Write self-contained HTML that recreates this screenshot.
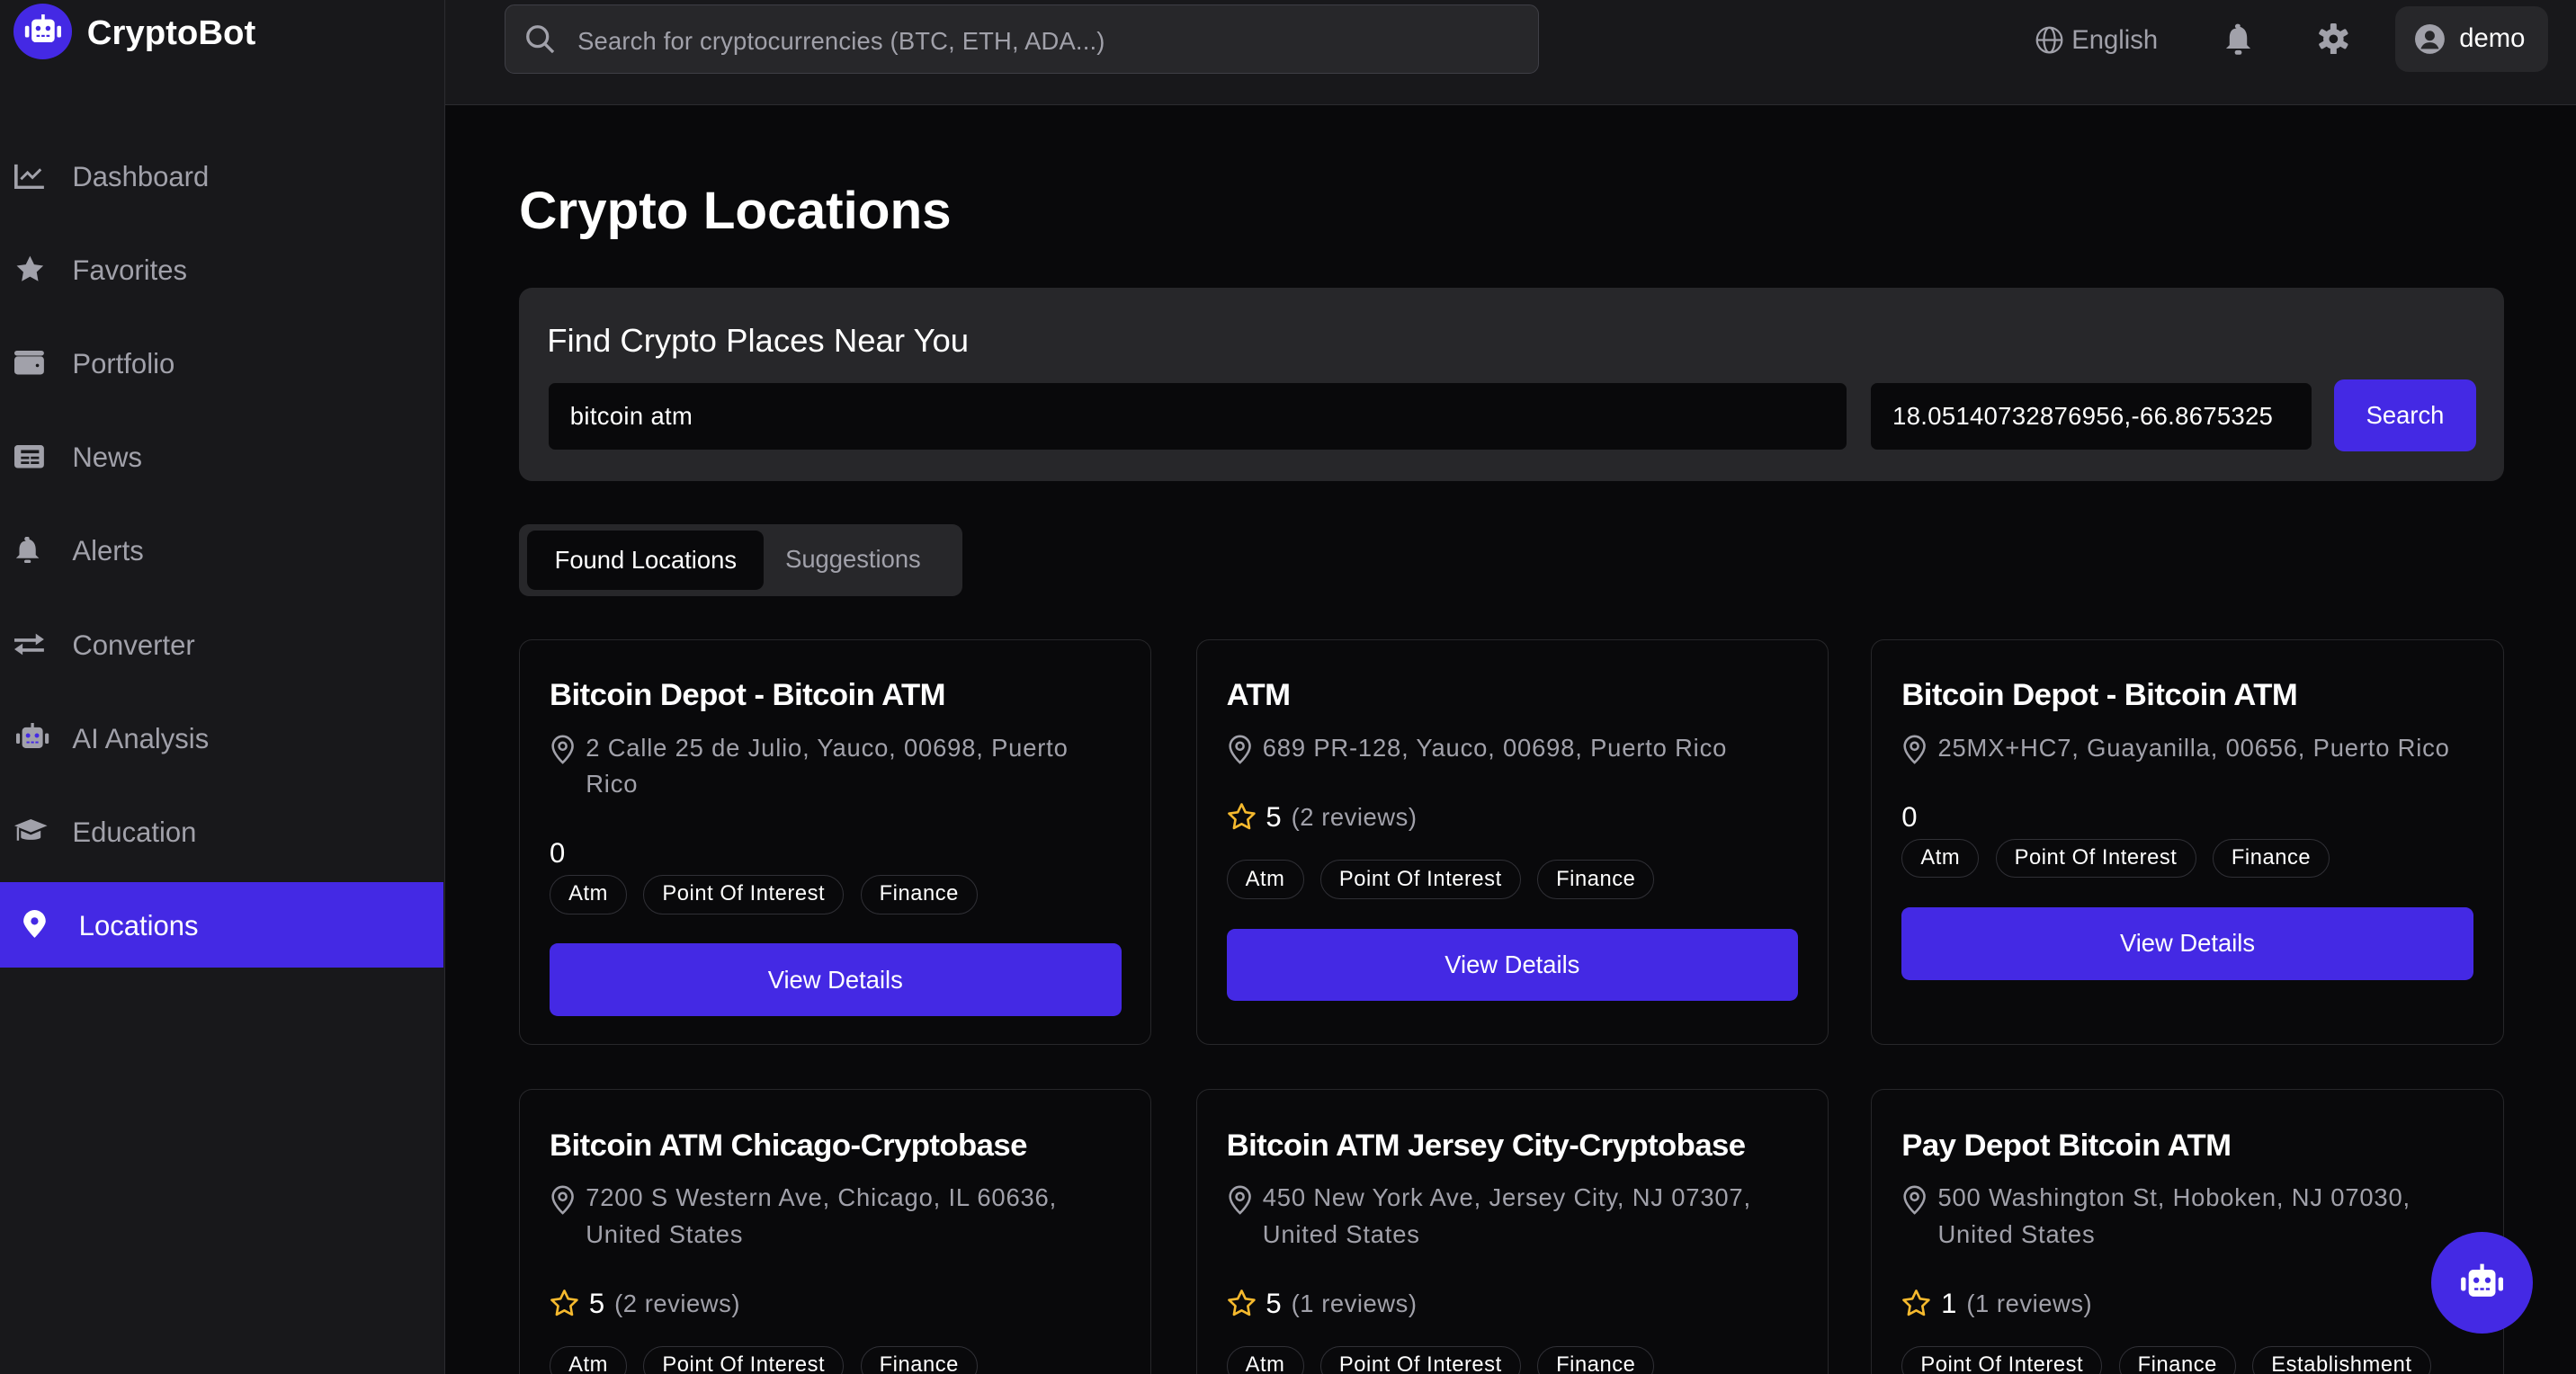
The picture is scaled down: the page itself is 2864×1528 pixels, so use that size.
<!DOCTYPE html>
<html><head><meta charset="utf-8"><style>
*{box-sizing:border-box;margin:0;padding:0}
html,body{width:2864px;height:1528px;overflow:hidden;background:#09090b}
#root{zoom:1.82653;width:1568px;height:837px;position:relative;font-family:"Liberation Sans",sans-serif;color:#fff;background:#09090b;overflow:hidden}
.side{position:absolute;left:0;top:0;width:271px;height:837px;background:#18181b;border-right:1px solid #2c2c30}
.logo{position:absolute;left:8px;top:2px;width:36px;height:34px;border-radius:50%;background:#4429e4;display:flex;align-items:center;justify-content:center}
.brand{position:absolute;left:53px;top:8px;font-size:21px;font-weight:bold}
.nav{position:absolute;left:0;width:270px;height:52px;display:flex;align-items:center;font-size:17px;color:#a1a1aa}
.nav svg{position:absolute;left:9px}
.nav span{position:absolute;left:44px;top:17px}
.nav.act{background:#4429e4;color:#fff}
.nav.act span{left:48px}
.top{position:absolute;left:271px;top:0;width:1297px;height:64px;background:#18181b;border-bottom:1px solid #2c2c30}
.sbox{position:absolute;left:36px;top:3px;width:630px;height:42px;background:#27272a;border:1px solid #3f3f46;border-radius:6px;font-size:15px;color:#a1a1aa;padding:13px 0 0 44px;letter-spacing:.1px}
.sbox svg{position:absolute;left:12px;top:11px}
.h1{position:absolute;left:316px;top:110px;font-size:32px;font-weight:bold}
.panel{position:absolute;left:316px;top:175px;width:1208px;height:118px;background:#27272a;border-radius:8px}
.inp{position:absolute;top:58px;height:41px;background:#09090b;border-radius:4px;font-size:15px;padding:12px 13px;white-space:nowrap;overflow:hidden;letter-spacing:.2px}
.btn{background:#4429e4;border-radius:6px;color:#fff;font-size:15px;display:flex;align-items:center;justify-content:center}
.tabs{position:absolute;left:316px;top:319px;width:270px;height:44px;background:#27272a;border-radius:6px;font-size:15px}
.card{position:absolute;width:385px;border:1px solid #27272a;border-radius:8px;background:#09090b;padding:20px 18px 0 18px}
.ct{font-size:19px;font-weight:bold;line-height:28px;letter-spacing:-.3px}
.ad{margin-top:7px;font-size:15px;line-height:22px;color:#a1a1aa;padding-left:22px;position:relative;letter-spacing:.45px}
.ad svg{position:absolute;left:0;top:3px}
.num{font-size:17px;line-height:24px;margin-top:19px}
.rt{font-size:17px;line-height:24px;margin-top:19px;display:flex;align-items:center;gap:6px}
.rt em{font-style:normal;color:#a1a1aa;font-size:15px;letter-spacing:.3px}
.tags{display:flex;gap:10px;height:24px}
.tag{border:1px solid #303036;border-radius:12px;height:24px;padding:0 11px;font-size:13px;display:flex;align-items:center;letter-spacing:.3px}
.vb{height:44px;margin-top:18px;border-radius:5px}
.fab{position:absolute;left:1480px;top:750px;width:62px;height:62px;border-radius:50%;background:#4429e4;display:flex;align-items:center;justify-content:center}
</style></head><body><div id="root">
<svg width="0" height="0" style="position:absolute"><defs>
<symbol id="bot" viewBox="0 0 24 20"><rect x="11" y="0" width="2" height="4" fill="currentColor"/><rect x="5" y="3" width="14" height="14" rx="2.5" fill="currentColor"/><rect x="1" y="7" width="2.5" height="7" rx="1" fill="currentColor"/><rect x="20.5" y="7" width="2.5" height="7" rx="1" fill="currentColor"/><circle cx="9" cy="8.5" r="1.5" fill="#4429e4"/><circle cx="15" cy="8.5" r="1.5" fill="#4429e4"/><rect x="8" y="12.5" width="2" height="1.2" fill="#4429e4"/><rect x="11" y="12.5" width="2" height="1.2" fill="#4429e4"/><rect x="14" y="12.5" width="2" height="1.2" fill="#4429e4"/></symbol>
<symbol id="pin" viewBox="0 0 16 18"><path d="M8 17s-6-5.5-6-10a6 6 0 0 1 12 0c0 4.5-6 10-6 10z" fill="none" stroke="#a1a1aa" stroke-width="1.4"/><circle cx="8" cy="7" r="2.2" fill="none" stroke="#a1a1aa" stroke-width="1.4"/></symbol>
<symbol id="star" viewBox="0 0 20 20"><path d="M10 1.5l2.6 5.4 5.9.8-4.3 4.1 1 5.8L10 14.8l-5.2 2.8 1-5.8L1.5 7.7l5.9-.8z" fill="none" stroke="#f5b92e" stroke-width="1.6" stroke-linejoin="round"/></symbol>
</defs></svg>

<div class="side">
<div class="logo"><svg width="24" height="20" style="color:#fff"><use href="#bot"/></svg></div>
<div class="brand">CryptoBot</div>
<div class="nav" style="top:81px"><svg width="18" height="16" viewBox="0 0 18 16"><path d="M1 1v14h17" stroke="#a1a1aa" stroke-width="2" fill="none"/><path d="M4 10l4-4 3 3 5-5" stroke="#a1a1aa" stroke-width="1.6" fill="none"/></svg><span>Dashboard</span></div>
<div class="nav" style="top:138px"><svg width="19" height="18" viewBox="0 0 20 20"><path d="M10 1l2.8 5.8 6.2.8-4.5 4.3 1.1 6.2L10 15l-5.6 3.1 1.1-6.2L1 7.6l6.2-.8z" fill="#a1a1aa"/></svg><span>Favorites</span></div>
<div class="nav" style="top:195px"><svg width="18" height="15" viewBox="0 0 18 15"><rect x="0" y="0" width="18" height="3" rx="1.5" fill="#a1a1aa"/><rect x="0" y="3.5" width="18" height="11" rx="2" fill="#a1a1aa"/><circle cx="14" cy="9" r="1" fill="#18181b"/></svg><span>Portfolio</span></div>
<div class="nav" style="top:252px"><svg width="18" height="14" viewBox="0 0 18 14"><rect x="0" y="0" width="18" height="14" rx="2" fill="#a1a1aa"/><rect x="4" y="3" width="11" height="2" fill="#18181b"/><rect x="4" y="7" width="5" height="1.5" fill="#18181b"/><rect x="10" y="7" width="5" height="1.5" fill="#18181b"/><rect x="4" y="10" width="5" height="1.5" fill="#18181b"/><rect x="10" y="10" width="5" height="1.5" fill="#18181b"/></svg><span>News</span></div>
<div class="nav" style="top:309px"><svg width="16" height="16" viewBox="0 0 16 16"><path d="M8 0a1 1 0 0 1 1 1.5C12 2.5 13 5 13 8v3l2 2H1l2-2V8c0-3 1-5.5 4-5.5A1 1 0 0 1 8 0z" fill="#a1a1aa"/><rect x="6" y="14" width="4" height="2" rx="1" fill="#a1a1aa"/></svg><span>Alerts</span></div>
<div class="nav" style="top:366px"><svg width="18" height="16" viewBox="0 0 18 16"><path d="M0 5h13V2l5 3.5-5 3.5V7H0z M18 11H5V8l-5 3.5L5 15v-2h13z" fill="#a1a1aa"/></svg><span>Converter</span></div>
<div class="nav" style="top:423px"><svg width="22" height="18" style="color:#a1a1aa"><use href="#bot"/></svg><span>AI Analysis</span></div>
<div class="nav" style="top:480px"><svg width="20" height="15" viewBox="0 0 20 15"><path d="M10 0L20 4 10 8 0 4z" fill="#a1a1aa"/><path d="M4 7v4c0 2 12 2 12 0V7l-6 2.5z" fill="#a1a1aa"/><rect x="1.5" y="5" width="1.3" height="8" fill="#a1a1aa"/></svg><span>Education</span></div>
<div class="nav act" style="top:537px"><svg width="18" height="18" viewBox="0 0 16 16" style="left:12px"><path d="M8 15S2 9 2 6a6 6 0 0 1 12 0c0 3-6 9-6 9z" fill="#fff"/><circle cx="8" cy="6" r="2" fill="#4429e4"/></svg><span>Locations</span></div>
</div>

<div class="top">
<div class="sbox"><svg width="18" height="18" viewBox="0 0 18 18"><circle cx="7.5" cy="7.5" r="6" stroke="#a1a1aa" stroke-width="1.8" fill="none"/><path d="M12 12l5 5" stroke="#a1a1aa" stroke-width="1.8"/></svg>Search for cryptocurrencies (BTC, ETH, ADA...)</div>
<svg style="position:absolute;left:968px;top:16px" width="17" height="17" viewBox="0 0 18 18"><circle cx="9" cy="9" r="8" stroke="#a1a1aa" stroke-width="1.3" fill="none"/><ellipse cx="9" cy="9" rx="3.5" ry="8" stroke="#a1a1aa" stroke-width="1.3" fill="none"/><path d="M1 9h16" stroke="#a1a1aa" stroke-width="1.3"/></svg>
<div style="position:absolute;left:990px;top:16px;font-size:16px;color:#a1a1aa">English</div>
<svg style="position:absolute;left:1083px;top:14px" width="17" height="20" viewBox="0 0 16 18"><path d="M8 0a1 1 0 0 1 1 1.5C12 2.5 13 5 13 8v4l2 2H1l2-2V8c0-3 1-5.5 4-5.5A1 1 0 0 1 8 0z" fill="#a1a1aa"/><rect x="6" y="15" width="4" height="2.5" rx="1.2" fill="#a1a1aa"/></svg>
<svg style="position:absolute;left:1140px;top:14px" width="19" height="19" viewBox="0 0 20 20"><g fill="#a1a1aa"><circle cx="10" cy="10" r="6.5"/><rect x="8" y="0" width="4" height="20" rx="1"/><rect x="8" y="0" width="4" height="20" rx="1" transform="rotate(60 10 10)"/><rect x="8" y="0" width="4" height="20" rx="1" transform="rotate(120 10 10)"/></g><circle cx="10" cy="10" r="2.8" fill="#18181b"/></svg>
<div style="position:absolute;left:1187px;top:4px;width:93px;height:40px;background:#27272a;border-radius:8px"><svg style="position:absolute;left:12px;top:11px" width="18" height="18" viewBox="0 0 18 18"><circle cx="9" cy="9" r="9" fill="#a1a1aa"/><circle cx="9" cy="7" r="3" fill="#27272a"/><path d="M3.5 15c1-3 3-4 5.5-4s4.5 1 5.5 4" fill="#27272a"/></svg><span style="position:absolute;left:39px;top:11px;font-size:16px">demo</span></div>
</div>

<div class="h1">Crypto Locations</div>
<div class="panel">
<div style="position:absolute;left:17px;top:21px;font-size:20px">Find Crypto Places Near You</div>
<div class="inp" style="left:18px;width:790px">bitcoin atm</div>
<div class="inp" style="left:823px;width:268px">18.05140732876956,-66.8675325</div>
<div class="btn" style="position:absolute;left:1105px;top:56px;width:86px;height:44px">Search</div>
</div>
<div class="tabs"><div style="position:absolute;left:5px;top:4px;width:144px;height:36px;background:#09090b;border-radius:5px;display:flex;align-items:center;justify-content:center">Found Locations</div><div style="position:absolute;left:162px;top:13px;color:#a1a1aa">Suggestions</div></div>

<div class="card" style="left:316px;top:389px;height:247px"><div class="ct">Bitcoin Depot - Bitcoin ATM</div><div class="ad"><svg width="16" height="18"><use href="#pin"/></svg>2 Calle 25 de Julio, Yauco, 00698, Puerto<br>Rico</div><div class="num" style="margin-bottom:1px">0</div><div class="tags"><div class="tag">Atm</div><div class="tag">Point Of Interest</div><div class="tag">Finance</div></div><div class="btn vb">View Details</div></div>
<div class="card" style="left:728px;top:389px;height:247px"><div class="ct">ATM</div><div class="ad"><svg width="16" height="18"><use href="#pin"/></svg>689 PR-128, Yauco, 00698, Puerto Rico</div><div class="rt" style="margin-bottom:14px"><svg width="18" height="18"><use href="#star"/></svg>5 <em>(2 reviews)</em></div><div class="tags"><div class="tag">Atm</div><div class="tag">Point Of Interest</div><div class="tag">Finance</div></div><div class="btn vb">View Details</div></div>
<div class="card" style="left:1139px;top:389px;height:247px"><div class="ct">Bitcoin Depot - Bitcoin ATM</div><div class="ad"><svg width="16" height="18"><use href="#pin"/></svg>25MX+HC7, Guayanilla, 00656, Puerto Rico</div><div class="num" style="margin-bottom:1px">0</div><div class="tags"><div class="tag">Atm</div><div class="tag">Point Of Interest</div><div class="tag">Finance</div></div><div class="btn vb">View Details</div></div>

<div class="card" style="left:316px;top:663px;height:250px"><div class="ct">Bitcoin ATM Chicago-Cryptobase</div><div class="ad"><svg width="16" height="18"><use href="#pin"/></svg>7200 S Western Ave, Chicago, IL 60636,<br>United States</div><div class="rt" style="margin-bottom:14px"><svg width="18" height="18"><use href="#star"/></svg>5 <em>(2 reviews)</em></div><div class="tags"><div class="tag">Atm</div><div class="tag">Point Of Interest</div><div class="tag">Finance</div></div></div>
<div class="card" style="left:728px;top:663px;height:250px"><div class="ct">Bitcoin ATM Jersey City-Cryptobase</div><div class="ad"><svg width="16" height="18"><use href="#pin"/></svg>450 New York Ave, Jersey City, NJ 07307,<br>United States</div><div class="rt" style="margin-bottom:14px"><svg width="18" height="18"><use href="#star"/></svg>5 <em>(1 reviews)</em></div><div class="tags"><div class="tag">Atm</div><div class="tag">Point Of Interest</div><div class="tag">Finance</div></div></div>
<div class="card" style="left:1139px;top:663px;height:250px"><div class="ct">Pay Depot Bitcoin ATM</div><div class="ad"><svg width="16" height="18"><use href="#pin"/></svg>500 Washington St, Hoboken, NJ 07030,<br>United States</div><div class="rt" style="margin-bottom:14px"><svg width="18" height="18"><use href="#star"/></svg>1 <em>(1 reviews)</em></div><div class="tags"><div class="tag">Point Of Interest</div><div class="tag">Finance</div><div class="tag">Establishment</div></div></div>

<div class="fab"><svg width="28" height="24" style="color:#fff"><use href="#bot"/></svg></div>
</div></body></html>
